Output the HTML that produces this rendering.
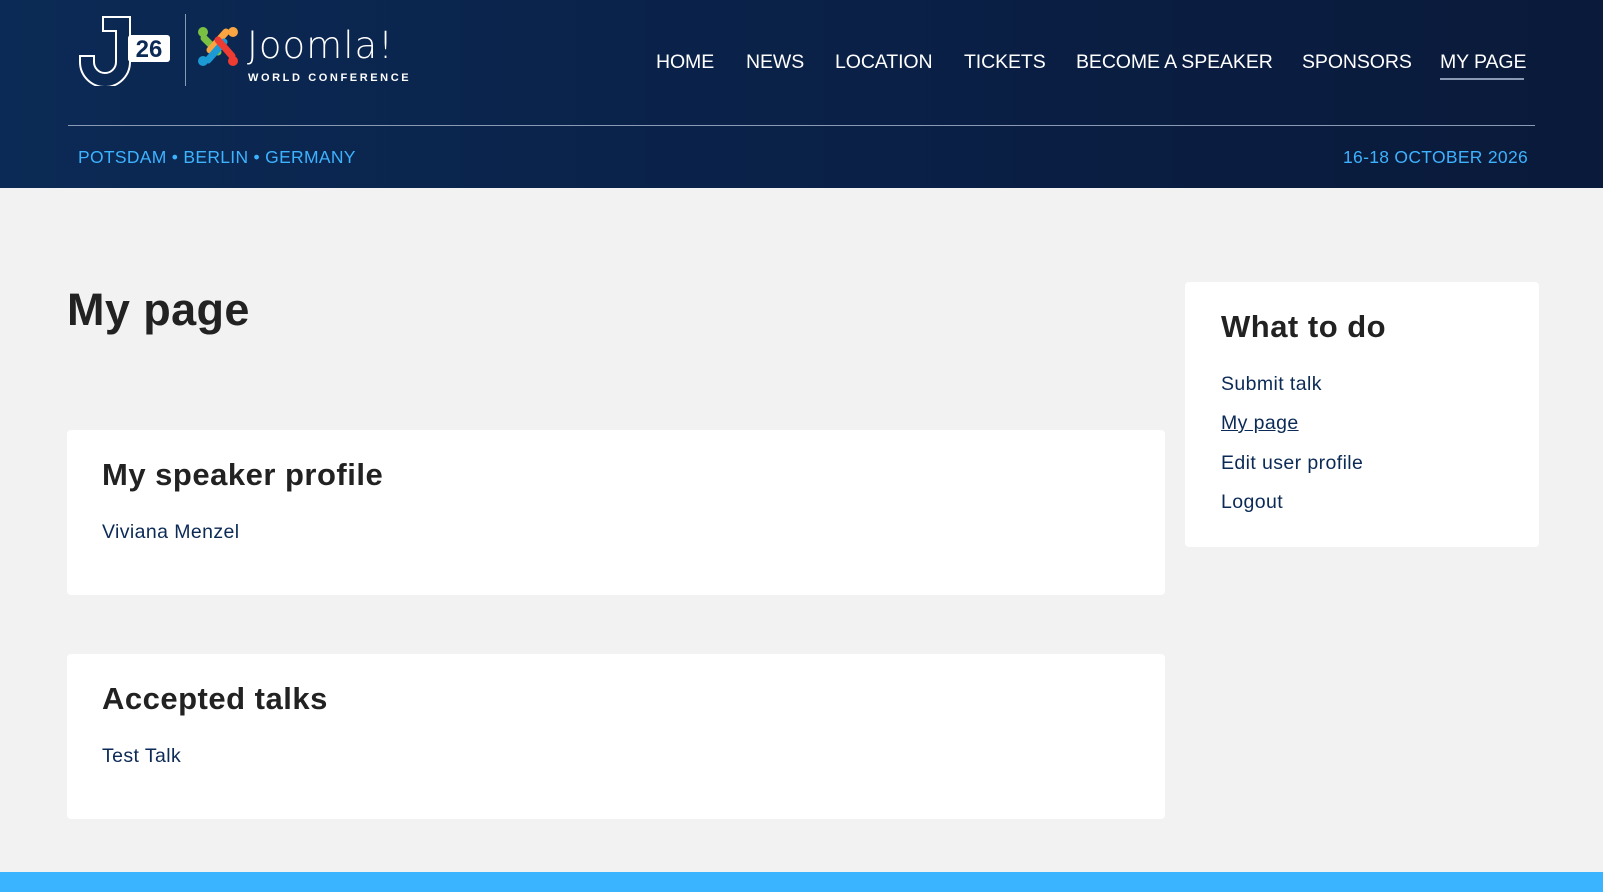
<!DOCTYPE html>
<html><head><meta charset="utf-8"><style>
*{margin:0;padding:0;box-sizing:border-box}
body{width:1603px;height:892px;background:#f2f2f2;font-family:"Liberation Sans",sans-serif;position:relative;overflow:hidden;color:#222}
.hdr{position:absolute;left:0;top:0;width:1603px;height:188px;background:linear-gradient(90deg,#0b2a55,#0a1f45 60%,#0a1a3a)}
.nav{position:absolute;top:51px;font-size:19.5px;color:#fff;letter-spacing:-0.1px}
.line{position:absolute;left:68px;top:125px;width:1467px;height:1px;background:#8a9ab5}
.sub{position:absolute;top:147px;font-size:17.5px;color:#3db2ff;letter-spacing:.3px}
.ab{position:absolute}
.card{position:absolute;background:#fff;border-radius:4px}
h1{position:absolute;left:67px;top:284px;font-size:45px;font-weight:bold;color:#222;letter-spacing:.4px}
.h2{position:absolute;font-size:31px;font-weight:bold;color:#222;letter-spacing:.5px}
.t{position:absolute;font-size:19.5px;color:#0b2a55;letter-spacing:.4px}
</style></head><body>
<div class="hdr">
 <svg class="ab" style="left:76px;top:14px" width="100" height="72" viewBox="0 0 100 72">
  <path d="M27 3 H54 V48 A25 25 0 0 1 4 48 V42 H18 V48 A11 11 0 0 0 40 48 V17 H27 Z" fill="none" stroke="#fff" stroke-width="2"/>
  <rect x="52" y="21" width="42" height="27" rx="3" fill="#fff"/>
  <text x="73" y="43" font-size="24" font-weight="bold" fill="#0b2a55" text-anchor="middle" font-family="Liberation Sans">26</text>
 </svg>
 <div class="ab" style="left:185px;top:14px;width:1px;height:72px;background:#8a9ab5"></div>
 <svg class="ab" style="left:196px;top:24px" width="44" height="44" viewBox="0 0 44 44">
  <path d="M8 14 L22 28" stroke="#7ac143" stroke-width="7" stroke-linecap="round"/>
  <path d="M30 8 L14 26" stroke="#f9a541" stroke-width="7" stroke-linecap="round"/>
  <path d="M12 36 L28 18" stroke="#1c9ad6" stroke-width="7" stroke-linecap="round"/>
  <path d="M22 16 L36 32" stroke="#ee3c33" stroke-width="7" stroke-linecap="round"/>
  <circle cx="7" cy="8" r="5" fill="#7ac143"/><circle cx="37" cy="8" r="5" fill="#f9a541"/>
  <circle cx="7" cy="37" r="5" fill="#1c9ad6"/><circle cx="37" cy="37" r="5" fill="#ee3c33"/>
 </svg>
 <div class="ab" style="left:247px;top:24px;font-size:37px;color:#fff;letter-spacing:1px;font-family:'DejaVu Sans',sans-serif;font-weight:200">Joomla!</div>
 <div class="ab" style="left:248px;top:72px;font-size:11px;color:#fff;font-weight:bold;letter-spacing:2.6px">WORLD CONFERENCE</div>
 <div class="nav" style="left:656px">HOME</div>
 <div class="nav" style="left:746px">NEWS</div>
 <div class="nav" style="left:835px">LOCATION</div>
 <div class="nav" style="left:964px">TICKETS</div>
 <div class="nav" style="left:1076px">BECOME A SPEAKER</div>
 <div class="nav" style="left:1302px">SPONSORS</div>
 <div class="nav" style="left:1440px">MY PAGE</div>
 <div class="ab" style="left:1440px;top:78px;width:84px;height:2px;background:#8a9ab5"></div>
 <div class="line"></div>
 <div class="sub" style="left:78px">POTSDAM • BERLIN • GERMANY</div>
 <div class="sub" style="left:1343px">16-18 OCTOBER 2026</div>
</div>
<h1>My page</h1>
<div class="card" style="left:67px;top:430px;width:1098px;height:165px"></div>
<div class="h2" style="left:102px;top:457px">My speaker profile</div>
<div class="t" style="left:102px;top:521px">Viviana Menzel</div>
<div class="card" style="left:67px;top:654px;width:1098px;height:165px"></div>
<div class="h2" style="left:102px;top:681px">Accepted talks</div>
<div class="t" style="left:102px;top:745px">Test Talk</div>
<div class="card" style="left:1185px;top:282px;width:354px;height:265px"></div>
<div class="h2" style="left:1221px;top:309px">What to do</div>
<div class="t" style="left:1221px;top:373px">Submit talk</div>
<div class="t" style="left:1221px;top:412px;text-decoration:underline">My page</div>
<div class="t" style="left:1221px;top:452px">Edit user profile</div>
<div class="t" style="left:1221px;top:491px">Logout</div>
<div class="ab" style="left:0;top:872px;width:1603px;height:20px;background:#3ab4ff"></div>
</body></html>
